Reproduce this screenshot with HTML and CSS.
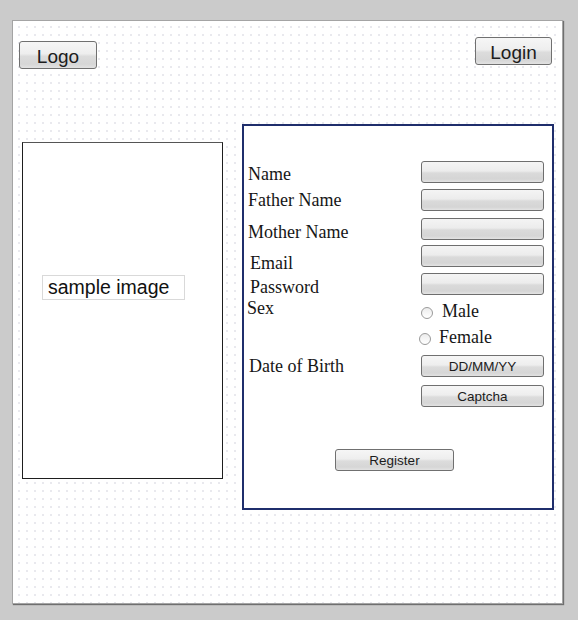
FILE: index.html
```html
<!DOCTYPE html>
<html>
<head>
<meta charset="utf-8">
<title>Register wireframe</title>
<link rel="stylesheet" href="styles.css">
</head>
<body>
<div class="canvas">
  <div class="header">
    <div class="btn btn-big btn-logo">Logo</div>
    <div class="btn btn-big btn-login">Login</div>
  </div>
  <div class="main">
    <div class="image-box">
      <div class="image-label">sample image</div>
    </div>
    <div class="form">
      <div class="cols">
        <div class="labels">
          <div class="lbl l-name">Name</div>
          <div class="lbl l-father">Father Name</div>
          <div class="lbl l-mother">Mother Name</div>
          <div class="lbl l-email">Email</div>
          <div class="lbl l-pass">Password</div>
          <div class="lbl l-sex">Sex</div>
          <div class="lbl l-dob">Date of Birth</div>
        </div>
        <div class="controls">
          <div class="field f1"></div>
          <div class="field f2"></div>
          <div class="field f3"></div>
          <div class="field f4"></div>
          <div class="field f5"></div>
          <div class="radio r-male"><span class="dot"></span>Male</div>
          <div class="radio r-female"><span class="dot"></span>Female</div>
          <div class="btn btn-small b-dob">DD/MM/YY</div>
          <div class="btn btn-small b-captcha">Captcha</div>
        </div>
      </div>
      <div class="btn btn-small b-register">Register</div>
    </div>
  </div>
</div>
</body>
</html>
```
FILE: styles.css
```css
html, body {
  margin: 0;
  padding: 0;
}
body {
  background: #cbcbcb;
  width: 578px;
  height: 620px;
  overflow: hidden;
}
.canvas {
  margin: 20px 0 0 12px;
  width: 551px;
  height: 584px;
  box-sizing: border-box;
  border: 1px solid #a4a4a4;
  box-shadow: 1px 1px 1px rgba(0,0,0,0.45);
  background-color: #ffffff;
  background-image: radial-gradient(circle, #e9e9ee 0.8px, transparent 1px);
  background-size: 8px 8px;
  background-position: 2px 2px;
}
.header {
  display: flex;
  justify-content: space-between;
  align-items: flex-start;
}
.btn {
  box-sizing: border-box;
  border: 1px solid #707070;
  border-radius: 3px;
  background: linear-gradient(#f6f6f6 0%, #eeeeee 45%, #dcdcdc 55%, #d6d6d6 85%, #e2e2e2 100%);
  font-family: "Liberation Sans", Arial, sans-serif;
  color: #1c1c1c;
  text-align: center;
}
.btn-big {
  height: 28px;
  line-height: 29px;
  font-size: 19px;
}
.btn-logo {
  width: 78px;
  margin: 20px 0 0 6px;
}
.btn-login {
  width: 77px;
  margin: 16px 10px 0 0;
}
.main {
  display: flex;
  align-items: flex-start;
}
.image-box {
  margin: 73px 0 0 9px;
  width: 201px;
  height: 337px;
  box-sizing: border-box;
  border: 1px solid #1e1e1e;
  border-top-color: #555;
  background: #fff;
  padding: 132px 0 0 19px;
}
.image-label {
  width: 143px;
  height: 25px;
  box-sizing: border-box;
  border: 1px solid #d9d9d9;
  background: #fff;
  font-family: "Liberation Sans", Arial, sans-serif;
  font-size: 19.5px;
  line-height: 22px;
  padding-left: 5px;
  color: #111;
}
.form {
  margin: 55px 0 0 19px;
  width: 312px;
  height: 386px;
  box-sizing: border-box;
  border: 2px solid #1f2e6c;
  background: #fff;
}
.cols {
  display: flex;
}
.labels {
  width: 177px;
  font-family: "Liberation Serif", "Times New Roman", serif;
  font-size: 18px;
  color: #161616;
}
.lbl {
  line-height: 20px;
  height: 20px;
  white-space: nowrap;
}
.l-name { margin: 38px 0 0 4px; }
.l-father { margin: 6px 0 0 4px; }
.l-mother { margin: 12px 0 0 4px; }
.l-email { margin: 11px 0 0 6px; }
.l-pass { margin: 4px 0 0 6px; }
.l-sex { margin: 1px 0 0 3px; }
.l-dob { margin: 38px 0 0 5px; }
.controls {
  width: 123px;
}
.field {
  height: 22px;
  box-sizing: border-box;
  border: 1px solid #6e6e6e;
  border-radius: 3px;
  background: linear-gradient(#f4f4f4 0%, #ececec 45%, #dadada 55%, #d5d5d5 85%, #e3e3e3 100%);
}
.f1 { margin-top: 35px; }
.f2 { margin-top: 6px; }
.f3 { margin-top: 7px; }
.f4 { margin-top: 5px; }
.f5 { margin-top: 6px; }
.radio {
  display: flex;
  align-items: flex-start;
  height: 20px;
  line-height: 20px;
  font-family: "Liberation Serif", "Times New Roman", serif;
  font-size: 18px;
  color: #161616;
  white-space: nowrap;
}
.dot {
  width: 12px;
  height: 12px;
  box-sizing: border-box;
  border: 1px solid #9a9a9a;
  border-radius: 50%;
  background: linear-gradient(#ececec, #ffffff);
  margin-top: 6px;
}
.r-male { margin: 6px 0 0 0; }
.r-male .dot { margin-right: 9px; }
.r-female { margin: 6px 0 0 -2px; }
.r-female .dot { margin-right: 8px; }
.btn-small {
  height: 22px;
  line-height: 22px;
  font-size: 13.5px;
}
.b-dob { margin-top: 8px; }
.b-captcha { margin-top: 8px; }
.b-register {
  width: 119px;
  margin: 42px 0 0 91px;
}
```
